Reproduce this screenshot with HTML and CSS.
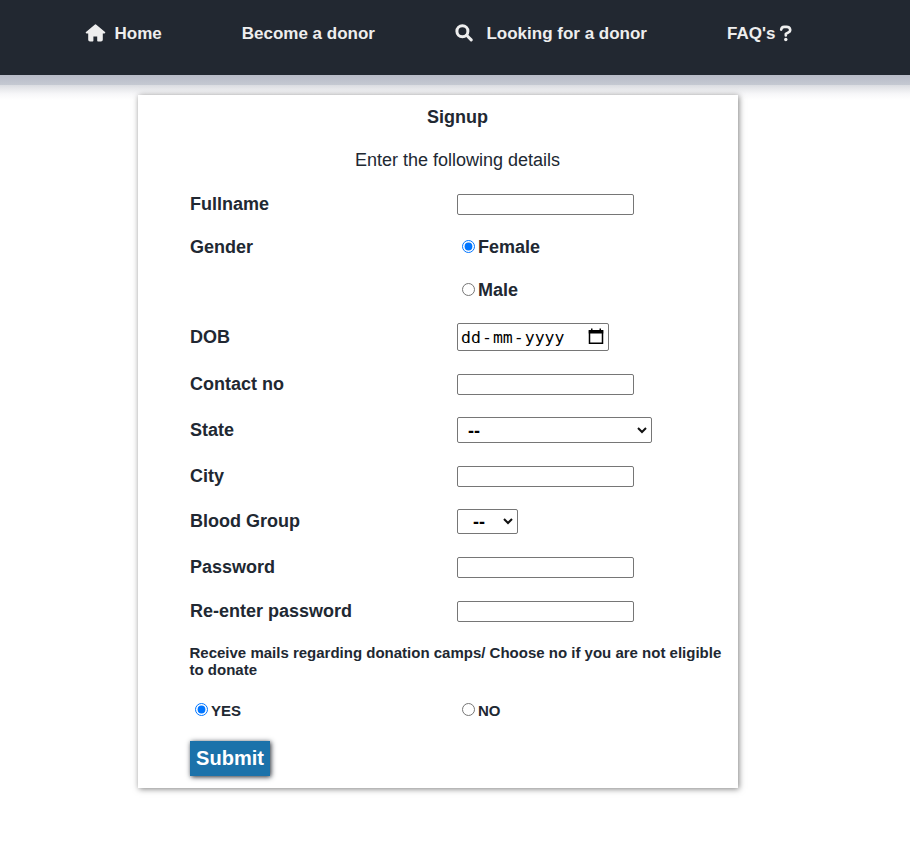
FILE: index.html
```
<!DOCTYPE html>
<html lang="en">
<head>
<meta charset="utf-8">
<title>Signup</title>
<link rel="stylesheet" href="styles.css">
</head>
<body>
<header class="nav">
  <a class="nav-item home"><svg width="21" height="18" viewBox="0 0 21 18"><path d="M10.500 1.200L1.500 8.600H4V15.700Q4 16.700 5 16.700H7.600V12.600Q7.600 11.800 8.400 11.800H12.200Q13 11.800 13 12.600V16.700H16Q17 16.700 17 15.700V8.600H19.500Z" fill="#eee" stroke="#eee" stroke-width="1.600" stroke-linejoin="round"/></svg><span>Home</span></a>
  <a class="nav-item">Become a donor</a>
  <a class="nav-item search"><svg width="18" height="18" viewBox="0 0 18 18"><circle cx="7.400" cy="7.200" r="5.500" fill="none" stroke="#eee" stroke-width="3"/><path d="M11.600 11.300L16.200 15.900" stroke="#eee" stroke-width="3" stroke-linecap="round"/></svg><span>Looking for a donor</span></a>
  <a class="nav-item faq"><span>FAQ's</span><svg width="13" height="17" viewBox="0 0 13 17"><path d="M2.200 4.600C2.400 2.900 3.300 1.900 5.100 1.900H7.600C11.500 1.900 12.300 6 9.500 7.400L6.800 8.900V10.400" fill="none" stroke="#eee" stroke-width="2.600" stroke-linecap="round" stroke-linejoin="round"/><circle cx="6.800" cy="14.500" r="1.700" fill="#eee"/></svg></a>
</header>
<div class="nav-shade"></div>
<form class="card">
  <h1 class="wide center title">Signup</h1>
  <p class="wide center subtitle">Enter the following details</p>
  <label for="name">Fullname</label><input class="field" id="name" type="text">
  <span>Gender</span><label class="choice"><input type="radio" name="gender" checked>Female</label>
  <span></span><label class="choice"><input type="radio" name="gender">Male</label>
  <span>DOB</span>
  <div class="date"><span>dd</span><span class="dash">-</span><span>mm</span><span class="dash">-</span><span>yyyy</span><svg width="16" height="17" viewBox="0 0 16 17"><path d="M1.500 3H14.500V15.250H1.500Z" fill="none" stroke="#000" stroke-width="1.500"/><path d="M0.750 2H15.250V5.500H0.750ZM3 0.500H4.500V3H3ZM11.500 0.500H13V3H11.500Z"/></svg></div>
  <label for="phone">Contact no</label><input class="field" id="phone" type="text">
  <span>State</span><div class="select state"><span>--</span><svg width="10" height="7" viewBox="0 0 10 7"><path d="M1 1L5 5L9 1" fill="none" stroke="#111" stroke-width="2"/></svg></div>
  <label for="city">City</label><input class="field" id="city" type="text">
  <span>Blood Group</span><div class="select blood"><span>--</span><svg width="10" height="7" viewBox="0 0 10 7"><path d="M1 1L5 5L9 1" fill="none" stroke="#111" stroke-width="2"/></svg></div>
  <label for="pass">Password</label><input class="field" id="pass" type="password">
  <label for="again">Re-enter password</label><input class="field" id="again" type="password">
  <p class="wide mails">Receive mails regarding donation camps/ Choose no if you are not eligible to donate</p>
  <label class="choice small"><input type="radio" name="mails" checked>YES</label>
  <label class="choice small"><input type="radio" name="mails">NO</label>
  <button class="submit" type="button">Submit</button>
</form>
</body>
</html>
```
FILE: styles.css
```
* { box-sizing: border-box; }
html { background: #fff; }
body {
  margin: 0;
  min-height: 844px;
  background: #fff;
  color: #212832;
  font-family: "Liberation Sans", Arial, sans-serif;
  font-size: 18px;
}
svg { display: block; flex: none; }
.nav {
  height: 75px;
  padding: 23px 0 0 85px;
  background: #222831;
  color: #eee;
  display: flex;
  align-items: flex-start;
  gap: 80px;
  font-size: 17px;
  font-weight: bold;
  line-height: 20px;
  white-space: nowrap;
}
.nav-item { display: flex; align-items: center; padding-top: 1px; }
.nav-item svg { margin-top: -2px; }
.home { gap: 8.5px; }
.search { gap: 13.5px; }
.faq { gap: 3.5px; }
.nav-shade {
  height: 25px;
  margin-bottom: -5px;
  background: linear-gradient(#b7bbc7 0, #c5c9d2 10px, #dadce1 10px, #e8e9ec 14px, #f7f7f9 19px, #fff 25px);
}
.card {
  position: relative;
  width: 600px;
  height: 693px;
  margin-left: 138px;
  padding: 0 13px 0 52px;
  background: #fff;
  box-shadow: 1px 1px 6px 0 rgba(0, 0, 0, .5);
  display: grid;
  grid-template-columns: 267px 268px;
  grid-template-rows: 44px 42px 46px 40px 46px 48px 46px 46px 46px 44px 48px 40px 60px 38px 59px;
  align-items: center;
  justify-items: start;
  font-weight: bold;
}
.wide { grid-column: 1 / -1; margin: 0; }
.center { justify-self: center; }
.title { font-size: 18px; }
.subtitle { font-weight: normal; }
.field {
  width: 177px;
  height: 21px;
  margin: 1px 0 0;
  padding: 1px 2px;
  border: 1px solid #767676;
  border-radius: 2px;
  background: #fff;
}
.choice { display: flex; align-items: center; }
.choice input { width: 13px; height: 13px; margin: 0 3px 2px 5px; }
.small { font-size: 15px; }
.date {
  width: 152px;
  height: 28px;
  padding: 0 4px 0 3px;
  border: 1px solid #767676;
  border-radius: 2px;
  color: #000;
  display: flex;
  align-items: center;
  font: 16.5px "DejaVu Sans Mono", monospace;
}
.date .dash { width: 12px; text-align: center; }
.date svg { margin: -2px 0 0 auto; }
.select {
  border: 1px solid #767676;
  border-radius: 2px;
  color: #000;
  display: flex;
  align-items: center;
  justify-content: space-between;
  padding: 0 4px 0 10px;
}
.select span { padding-top: 2px; }
.state { width: 195px; height: 26px; }
.blood { width: 61px; height: 25px; padding-left: 15px; }
.mails { font-size: 15px; line-height: 17px; margin-left: -0.5px; }
.submit {
  width: 80px;
  height: 35px;
  padding: 0;
  border: 0;
  background: #1b72aa;
  color: #fff;
  font: bold 20px "Liberation Sans", Arial, sans-serif;
  box-shadow: 1px 1px 5px #222831;
}
```
